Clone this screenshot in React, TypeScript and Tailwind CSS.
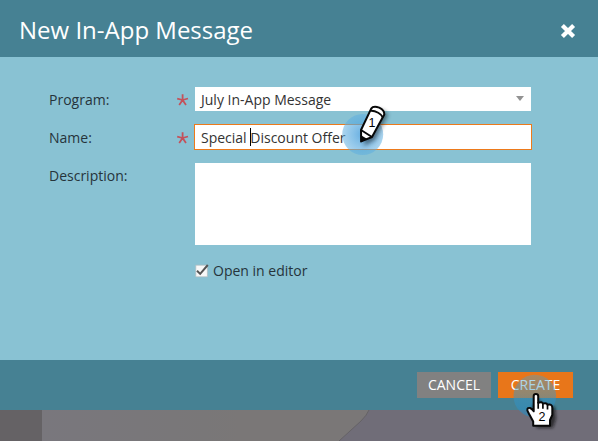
import React from "react";

const font = "font-['Open_Sans','Noto_Sans',sans-serif]";

function Required() {
  return (
    <svg className="mt-px h-3 w-3 shrink-0" viewBox="0 0 12 12" fill="none" stroke="#c4515a" strokeWidth="1.8">
      <path d="M5.6 6V.3M5.6 6L.2 4.5M5.6 6l5.4-1.5M5.6 6l-3.4 4.9M5.6 6l3.4 4.9" />
    </svg>
  );
}

function PencilMarker() {
  return (
    <svg className="pointer-events-none absolute left-[335px] top-[95px] h-[70px] w-[70px]" viewBox="335 95 70 70">
      <defs>
        <radialGradient id="glow1">
          <stop offset="0" stopColor="#4ba0dc" stopOpacity=".85" />
          <stop offset="1" stopColor="#5eaee0" stopOpacity=".52" />
        </radialGradient>
        <filter id="soft1" x="-50%" y="-50%" width="200%" height="200%">
          <feGaussianBlur stdDeviation="2" />
        </filter>
      </defs>
      <circle cx="362.7" cy="134.5" r="20.5" fill="url(#glow1)" />
      <path d="M373 108Q381 106 386 113L373 138L362 144L363 130Z" fill="#17242c" opacity=".55" filter="url(#soft1)" transform="translate(2 2)" />
      <path d="M361 130L371.2 108.6Q373.2 105.6 379.2 107.6Q384.6 110.2 384.3 114.4L372 137L361.2 141.4Z" fill="#fff" stroke="#080808" strokeWidth="2" strokeLinejoin="round" />
      <path d="M370.4 110.8Q374 110.4 378.2 112.8Q381.8 114.8 382.8 117.4M361 130L372 137" fill="none" stroke="#080808" strokeWidth="1.9" />
      <path d="M360.5 135L367 138.8L360.5 142.5Z" fill="#080808" />
      <text x="368.6" y="127" fontSize="12.5" fill="#000" className="font-['Liberation_Sans',sans-serif]">1</text>
    </svg>
  );
}

function HandMarker() {
  return (
    <svg className="pointer-events-none absolute left-[505px] top-[371px] h-[70px] w-[70px]" viewBox="505 371 70 70">
      <defs>
        <filter id="soft2" x="-50%" y="-50%" width="200%" height="200%">
          <feGaussianBlur stdDeviation="1.8" />
        </filter>
        <linearGradient id="glow2" x1="0" y1="0" x2="0" y2="1">
          <stop offset="0" stopColor="#4aa3d0" stopOpacity=".38" />
          <stop offset="1" stopColor="#2789bd" stopOpacity=".65" />
        </linearGradient>
      </defs>
      <circle cx="534.8" cy="396" r="21.3" fill="url(#glow2)" />
      <path d="M534 396L540 402L552 405L553 417L550 426H534L527 410Z" fill="#111" opacity=".65" filter="url(#soft2)" transform="translate(3 2)" />
      <path d="M533.7 410V396Q533.7 393.9 535.9 393.9Q538.2 393.9 538.2 396V402.8Q542.2 401.4 542.9 403.6Q546.8 402.5 547.5 404.8Q552.3 403.6 552.3 408V415L550 420V425.8H533.2V421.5L529.1 414L527.4 410.6Q527 407.3 530 408Q532 408.7 533.7 411.3Z" fill="#fff" stroke="#080808" strokeWidth="2" strokeLinejoin="round" />
      <path d="M538.2 402V408.7M542.9 403V408.7M547.5 404V409.5" stroke="#080808" strokeWidth="1.7" />
      <text x="538.4" y="421" fontSize="12.5" fill="#000" className="font-['Liberation_Sans',sans-serif]">2</text>
    </svg>
  );
}

export default function App() {
  return (
    <main className={`relative flex h-[441px] w-[598px] flex-col overflow-hidden bg-[#89c2d3] text-sm text-[#26343b] ${font}`}>
      <header className="flex h-[57px] shrink-0 items-center justify-between bg-[#468193] pl-[19px] pr-[22px] pt-1 text-white">
        <h1 className="-mt-0.5 text-[24px] leading-8">New In-App Message</h1>
        <button aria-label="Close">
          <svg className="h-4 w-4" viewBox="0 0 16 16" stroke="#fff" strokeWidth="4.2">
            <path d="M2.4 2.4l11.2 11.2M13.6 2.4L2.4 13.6" />
          </svg>
        </button>
      </header>

      <section className="flex h-[303px] shrink-0 flex-col pl-[49px] pr-[66px] pt-[29px]">
        <div className="flex h-[26px] items-center">
          <label className="w-32 pt-0.5">Program:</label>
          <Required />
          <div className="ml-[6px] flex h-6 w-[336px] items-center justify-between bg-white pl-[6px] pr-[7px] text-[#333]">
            <span className="pt-px">July In-App Message</span>
            <span className="mb-0.5 h-0 w-0 border-x-[4.5px] border-t-[5px] border-x-transparent border-t-[#929292]" />
          </div>
        </div>
        <div className="mt-3 flex h-[26px] items-center">
          <label className="w-32 pt-0.5">Name:</label>
          <Required />
          <div className="ml-[5px] flex h-[26px] w-[338px] items-center border border-[#ed7a1b] bg-white pl-[6px] text-[#333]">
            <span className="whitespace-pre pt-0.5">Special </span>
            <span className="-mr-px h-[18px] w-px bg-black" />
            <span className="pt-0.5">Discount Offer</span>
          </div>
        </div>
        <div className="mt-[13px] flex h-[82px]">
          <label className="w-[146px] pt-[3px]">Description:</label>
          <div className="h-[82px] w-[336px] bg-white" />
        </div>
        <label className="ml-[146px] mt-4 flex h-5 items-center">
          <svg className="h-[14px] w-[14px]" viewBox="0 0 14 14">
            <path d="M.8 1.2h11.6v11.6H.8z" fill="#f8f8f8" stroke="#b3bbc0" strokeWidth=".7" />
            <path d="M2 6.7l3.2 3.2L12.8 1" fill="none" stroke="#555" strokeWidth="2" />
          </svg>
          <span className="ml-1">Open in editor</span>
        </label>
      </section>

      <footer className="flex h-[50px] shrink-0 items-start justify-end gap-[7px] bg-[#468193] pr-[25px] pt-3 text-white">
        <button className="h-[26px] w-[74px] bg-[#818181]">CANCEL</button>
        <button className="h-[26px] w-[75px] bg-[#e8761a]">CREATE</button>
      </footer>
      <div className="flex h-[31px] shrink-0">
        <div className="w-[42px] bg-[#656265]" />
        <svg className="h-[31px] w-[556px]" viewBox="0 0 556 31">
          <defs>
            <linearGradient id="page">
              <stop offset="0" stopColor="#79777d" />
              <stop offset=".5" stopColor="#797778" />
              <stop offset=".6" stopColor="#7a7777" />
            </linearGradient>
          </defs>
          <path d="M0 0h556v31H0z" fill="#706d78" />
          <path d="M0 0H327Q325 5 319 11L297 31H0z" fill="url(#page)" />
          <path d="M327 0Q325 5 319 11L297 31" fill="none" stroke="#656266" />
        </svg>
      </div>
      <PencilMarker />
      <HandMarker />
    </main>
  );
}
